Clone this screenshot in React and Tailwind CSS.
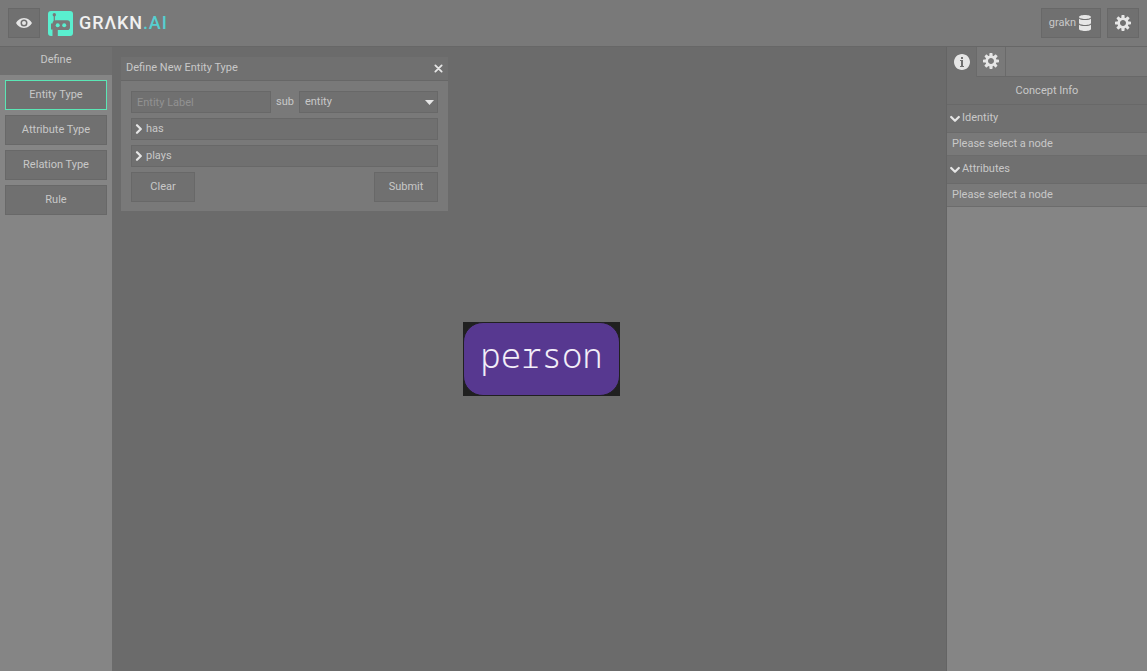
import React from "react";

const COG =
  "M15.19 6.39h-1.85c-.11-.37-.27-.71-.45-1.04l1.36-1.36c.31-.31.31-.82 0-1.13l-1.13-1.13c-.31-.31-.82-.31-1.13 0l-1.36 1.36c-.33-.17-.67-.33-1.04-.44V.79c0-.44-.36-.8-.8-.8h-1.6c-.44 0-.8.36-.8.8v1.86c-.39.12-.75.28-1.1.47l-1.3-1.3c-.3-.3-.79-.3-1.09 0L1.82 2.91c-.3.3-.3.79 0 1.09l1.3 1.3c-.2.34-.36.7-.48 1.09H.79c-.44 0-.8.36-.8.8v1.6c0 .44.36.8.8.8h1.85c.11.37.27.71.45 1.04l-1.36 1.36c-.31.31-.31.82 0 1.13l1.13 1.13c.31.31.82.31 1.13 0l1.36-1.36c.33.18.67.33 1.04.44v1.86c0 .44.36.8.8.8h1.6c.44 0 .8-.36.8-.8v-1.86c.39-.12.75-.28 1.1-.47l1.3 1.3c.3.3.79.3 1.09 0l1.09-1.09c.3-.3.3-.79 0-1.09l-1.3-1.3c.19-.35.36-.71.48-1.1h1.85c.44 0 .8-.36.8-.8v-1.6a.816.816 0 00-.81-.79zm-7.2 4.6c-1.66 0-3-1.34-3-3s1.34-3 3-3 3 1.34 3 3-1.34 3-3 3z";
const INFO =
  "M8 0C3.58 0 0 3.58 0 8s3.58 8 8 8 8-3.58 8-8-3.58-8-8-8zM7 3h2v2H7V3zm3 10H6v-1h1V7H6V6h3v6h1v1z";
const EYE =
  "M8 3C4 3 1.200 5.900 0 8c1.200 2.100 4 5 8 5s6.800-2.900 8-5c-1.200-2.100-4-5-8-5zm0 8.500a3.500 3.500 0 110-7 3.500 3.500 0 010 7zm0-5.500a2 2 0 100 4 2 2 0 000-4z";
const DATABASE =
  "M8 0C4.700 0 2 .9 2 2s2.700 2 6 2 6-.9 6-2-2.700-2-6-2zM2 3.500V8c0 1.100 2.700 2 6 2s6-.9 6-2V3.500C13.400 4.500 10.900 5 8 5s-5.400-.5-6-1.500zM2 9.500V14c0 1.100 2.700 2 6 2s6-.9 6-2V9.500c-.6 1-3.100 1.500-6 1.500s-5.400-.5-6-1.500z";

function Icon({ d, className = "size-4" }) {
  return (
    <svg viewBox="0 0 16 16" className={`${className} shrink-0`} fill="#e6e6e6" fillRule="evenodd" aria-hidden="true">
      <path d={d} />
    </svg>
  );
}

function Chevron({ open = false }) {
  return (
    <svg viewBox="0 0 10 10" className="size-[10px] shrink-0" fill="none" stroke="#e6e6e6" strokeWidth="2.200" strokeLinecap="round" strokeLinejoin="round" aria-hidden="true">
      <path d={open ? "M1.200 3l3.800 3.800L8.800 3" : "M3 1.200L6.800 5 3 8.800"} />
    </svg>
  );
}

const box = "border border-[#686868] bg-[#707070]";

function Logo() {
  return (
    <div className="flex items-center gap-[6px]">
      <svg viewBox="0 0 25 25" className="size-[25px]" aria-hidden="true">
        <rect width="25" height="25" rx="3" fill="#5aefcf" />
        <circle cx="6.300" cy="3.800" r="1.700" fill="#797979" />
        <path d="M6.300 4v6" stroke="#797979" strokeWidth="1.200" />
        <path d="M3 12.500h1.500A3.500 3.500 0 018 9.300h11.200a2.800 2.800 0 012.800 2.800v4.200a2.800 2.800 0 01-2.800 2.800H9.800V25H4.500v-6.500H3z" fill="#797979" />
        <circle cx="9.700" cy="14.200" r="2" fill="#5aefcf" />
        <circle cx="16.200" cy="14.200" r="2" fill="#5aefcf" />
      </svg>
      <span className="text-lg leading-6 font-medium tracking-wider text-[#f0f0f0]">
        GRΛKN<span className="text-[#56cfd0]">.AI</span>
      </span>
    </div>
  );
}

function Section({ title }) {
  return (
    <section>
      <button type="button" className="flex h-7 w-full items-center gap-[2px] border-b border-[#6a6a6a] bg-[#707070] pl-[3px] text-left">
        <Chevron open />
        {title}
      </button>
      <p className="h-[23px] border-b border-[#6c6c6c] bg-[#797979] pl-[5px] leading-[22px]">Please select a node</p>
    </section>
  );
}

export default function App() {
  const types = ["Entity Type", "Attribute Type", "Relation Type", "Rule"];
  return (
    <div className="flex min-h-screen flex-col bg-[#6b6b6b] font-['Roboto',sans-serif] text-[11px] text-[#c8c8c8]">
      <header className="flex h-[47px] items-center justify-between border-b border-[#676767] bg-[#797979] px-2">
        <div className="flex items-center gap-2">
          <button type="button" aria-label="View" className={`flex h-[30px] w-8 items-center justify-center ${box}`}>
            <Icon d={EYE} />
          </button>
          <Logo />
        </div>
        <div className="flex gap-[6px]">
          <button type="button" className={`flex h-[30px] w-[60px] items-center justify-center gap-px ${box}`}>
            grakn
            <Icon d={DATABASE} />
          </button>
          <button type="button" aria-label="Settings" className={`flex h-[30px] w-8 items-center justify-center ${box}`}>
            <Icon d={COG} />
          </button>
        </div>
      </header>

      <div className="flex flex-1">
        <nav className="w-28 shrink-0 bg-[#858585]">
          <h2 className="h-7 bg-[#707070] text-center leading-[26px]">Define</h2>
          <div className="flex flex-col gap-[5px] p-[5px]">
            {types.map((t, i) => (
              <button
                key={t}
                type="button"
                className={i === 0 ? "h-[30px] border border-[#5be6b5] bg-[#707070]" : `h-[30px] ${box}`}
              >
                {t}
              </button>
            ))}
          </div>
        </nav>

        <main className="flex flex-1 flex-col pt-[10px] pl-[9px]">
          <form className="w-[327px] bg-[#797979]" onSubmit={(e) => e.preventDefault()}>
            <div className="flex h-6 items-center justify-between border-b border-[#676767] bg-[#707070] px-[5px]">
              <h1>Define New Entity Type</h1>
              <button type="button" aria-label="Close">
                <svg viewBox="0 0 10 10" className="size-[9px]" fill="none" stroke="#e6e6e6" strokeWidth="2" strokeLinecap="round">
                  <path d="M1.500 1.500l7 7m0-7l-7 7" />
                </svg>
              </button>
            </div>
            <div className="flex flex-col gap-[5px] px-[10px] pt-[10px] pb-[9px]">
              <div className="flex items-center gap-[5px]">
                <input
                  aria-label="Entity Label"
                  placeholder="Entity Label"
                  className={`h-[22px] w-[140px] px-[5px] placeholder:text-[#929292] ${box}`}
                />
                <label htmlFor="parent">sub</label>
                <div className="grid min-w-0 flex-1 items-center">
                  <select id="parent" className={`col-start-1 row-start-1 h-[22px] w-full appearance-none px-[5px] ${box}`}>
                    <option>entity</option>
                  </select>
                  <svg viewBox="0 0 8 5" className="pointer-events-none col-start-1 row-start-1 mr-1 h-[5px] w-[9px] justify-self-end" preserveAspectRatio="none" fill="#e6e6e6" aria-hidden="true">
                    <path d="M0 0h8L4 5z" />
                  </svg>
                </div>
              </div>
              {["has", "plays"].map((t) => (
                <button key={t} type="button" className={`flex h-[22px] items-center gap-[2px] px-[2px] ${box}`}>
                  <Chevron />
                  {t}
                </button>
              ))}
              <div className="flex justify-between">
                <button type="reset" className={`h-[30px] w-16 ${box}`}>Clear</button>
                <button type="submit" className={`h-[30px] w-16 ${box}`}>Submit</button>
              </div>
            </div>
          </form>
          <div className="mt-[111px] ml-4 self-center bg-[#202020]">
            <div className="h-[74px] w-[157px] rounded-[20px] border border-[#202020] bg-[#573890] text-center font-['Noto_Sans_Mono','DejaVu_Sans_Mono',monospace] text-[34px] leading-[64px] font-light text-[#f2eef8]">
              person
            </div>
          </div>
        </main>

        <aside className="w-[201px] shrink-0 border-l border-[#646464] bg-[#858585]">
          <div className="flex h-[30px] border-b border-[#686868] bg-[#797979]">
            <button type="button" aria-label="Info" className="-mb-px flex w-[30px] items-center justify-center border-r border-[#6a6a6a] bg-[#707070] pb-px">
              <Icon d={INFO} />
            </button>
            <button type="button" aria-label="Settings" className="flex w-[29px] items-center justify-center border-r border-[#6a6a6a] pb-px">
              <Icon d={COG} />
            </button>
          </div>
          <h2 className="h-7 border-b border-[#686868] bg-[#707070] text-center leading-[27px]">Concept Info</h2>
          <Section title="Identity" />
          <Section title="Attributes" />
        </aside>
      </div>
    </div>
  );
}
